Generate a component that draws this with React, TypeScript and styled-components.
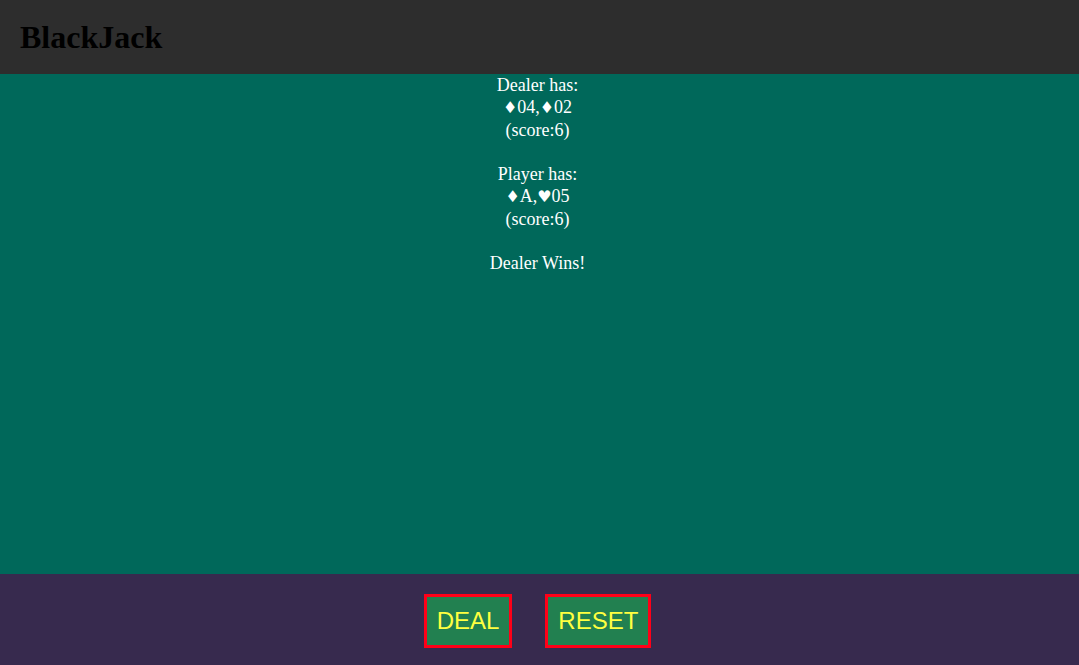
import styled, { createGlobalStyle } from "styled-components";

const GlobalStyle = createGlobalStyle`
    html, body {
        margin: 0;
        padding: 0;
        height: 100%;
    }
    #root {
        height: 100%;
    }
`;

const Page = styled.div`
    display: flex;
    flex-direction: column;
    height: 665px;
    font-family: "Liberation Serif", "DejaVu Serif", serif;
`;

const Header = styled.header`
    height: 74px;
    background-color: #2d2d2d;
    display: flex;
    align-items: center;
    padding: 0 20px;
    flex-shrink: 0;
`;

const Title = styled.h1`
    margin: 0;
    font-size: 32px;
    font-weight: bold;
    color: #000;
`;

const Table = styled.main`
    flex: 1;
    background-color: #00685a;
    color: #fff;
    text-align: center;
    font-size: 18px;
    line-height: 22px;
    padding-right: 4px;
`;

const Hand = styled.div`
    margin-bottom: 22px;
`;

const Suit = styled.span`
    font-family: "DejaVu Sans", sans-serif;
    font-size: 16px;
`;

const Footer = styled.footer`
    height: 91px;
    flex-shrink: 0;
    background-color: #372a4e;
    display: flex;
    justify-content: center;
    align-items: flex-start;
    gap: 33px;
    padding: 20px 4px 0 0;
    box-sizing: border-box;
`;

const Button = styled.button`
    height: 54px;
    padding: 0 10px;
    background-color: #228050;
    border: 3px solid #ff0018;
    color: #ffff40;
    font-family: "Liberation Sans", Arial, sans-serif;
    font-size: 24px;
    cursor: pointer;
`;

interface ICard {
    suit: string;
    rank: string;
}

interface IHand {
    label: string;
    cards: ICard[];
    score: number;
}

const hands: IHand[] = [
    { label: "Dealer", cards: [{ suit: "♦", rank: "04" }, { suit: "♦", rank: "02" }], score: 6 },
    { label: "Player", cards: [{ suit: "♦", rank: "A" }, { suit: "♥", rank: "05" }], score: 6 },
];

function App() {
    return (
        <Page>
            <GlobalStyle />
            <Header>
                <Title>BlackJack</Title>
            </Header>
            <Table>
                {hands.map((hand) => (
                    <Hand key={hand.label}>
                        <div>{hand.label} has:</div>
                        <div>
                            {hand.cards.map((card, i) => (
                                <span key={i}>
                                    {i > 0 && ","}
                                    <Suit>{card.suit}</Suit>
                                    {card.rank}
                                </span>
                            ))}
                        </div>
                        <div>(score:{hand.score})</div>
                    </Hand>
                ))}
                <div>Dealer Wins!</div>
            </Table>
            <Footer>
                <Button>DEAL</Button>
                <Button>RESET</Button>
            </Footer>
        </Page>
    );
}

export default App;
